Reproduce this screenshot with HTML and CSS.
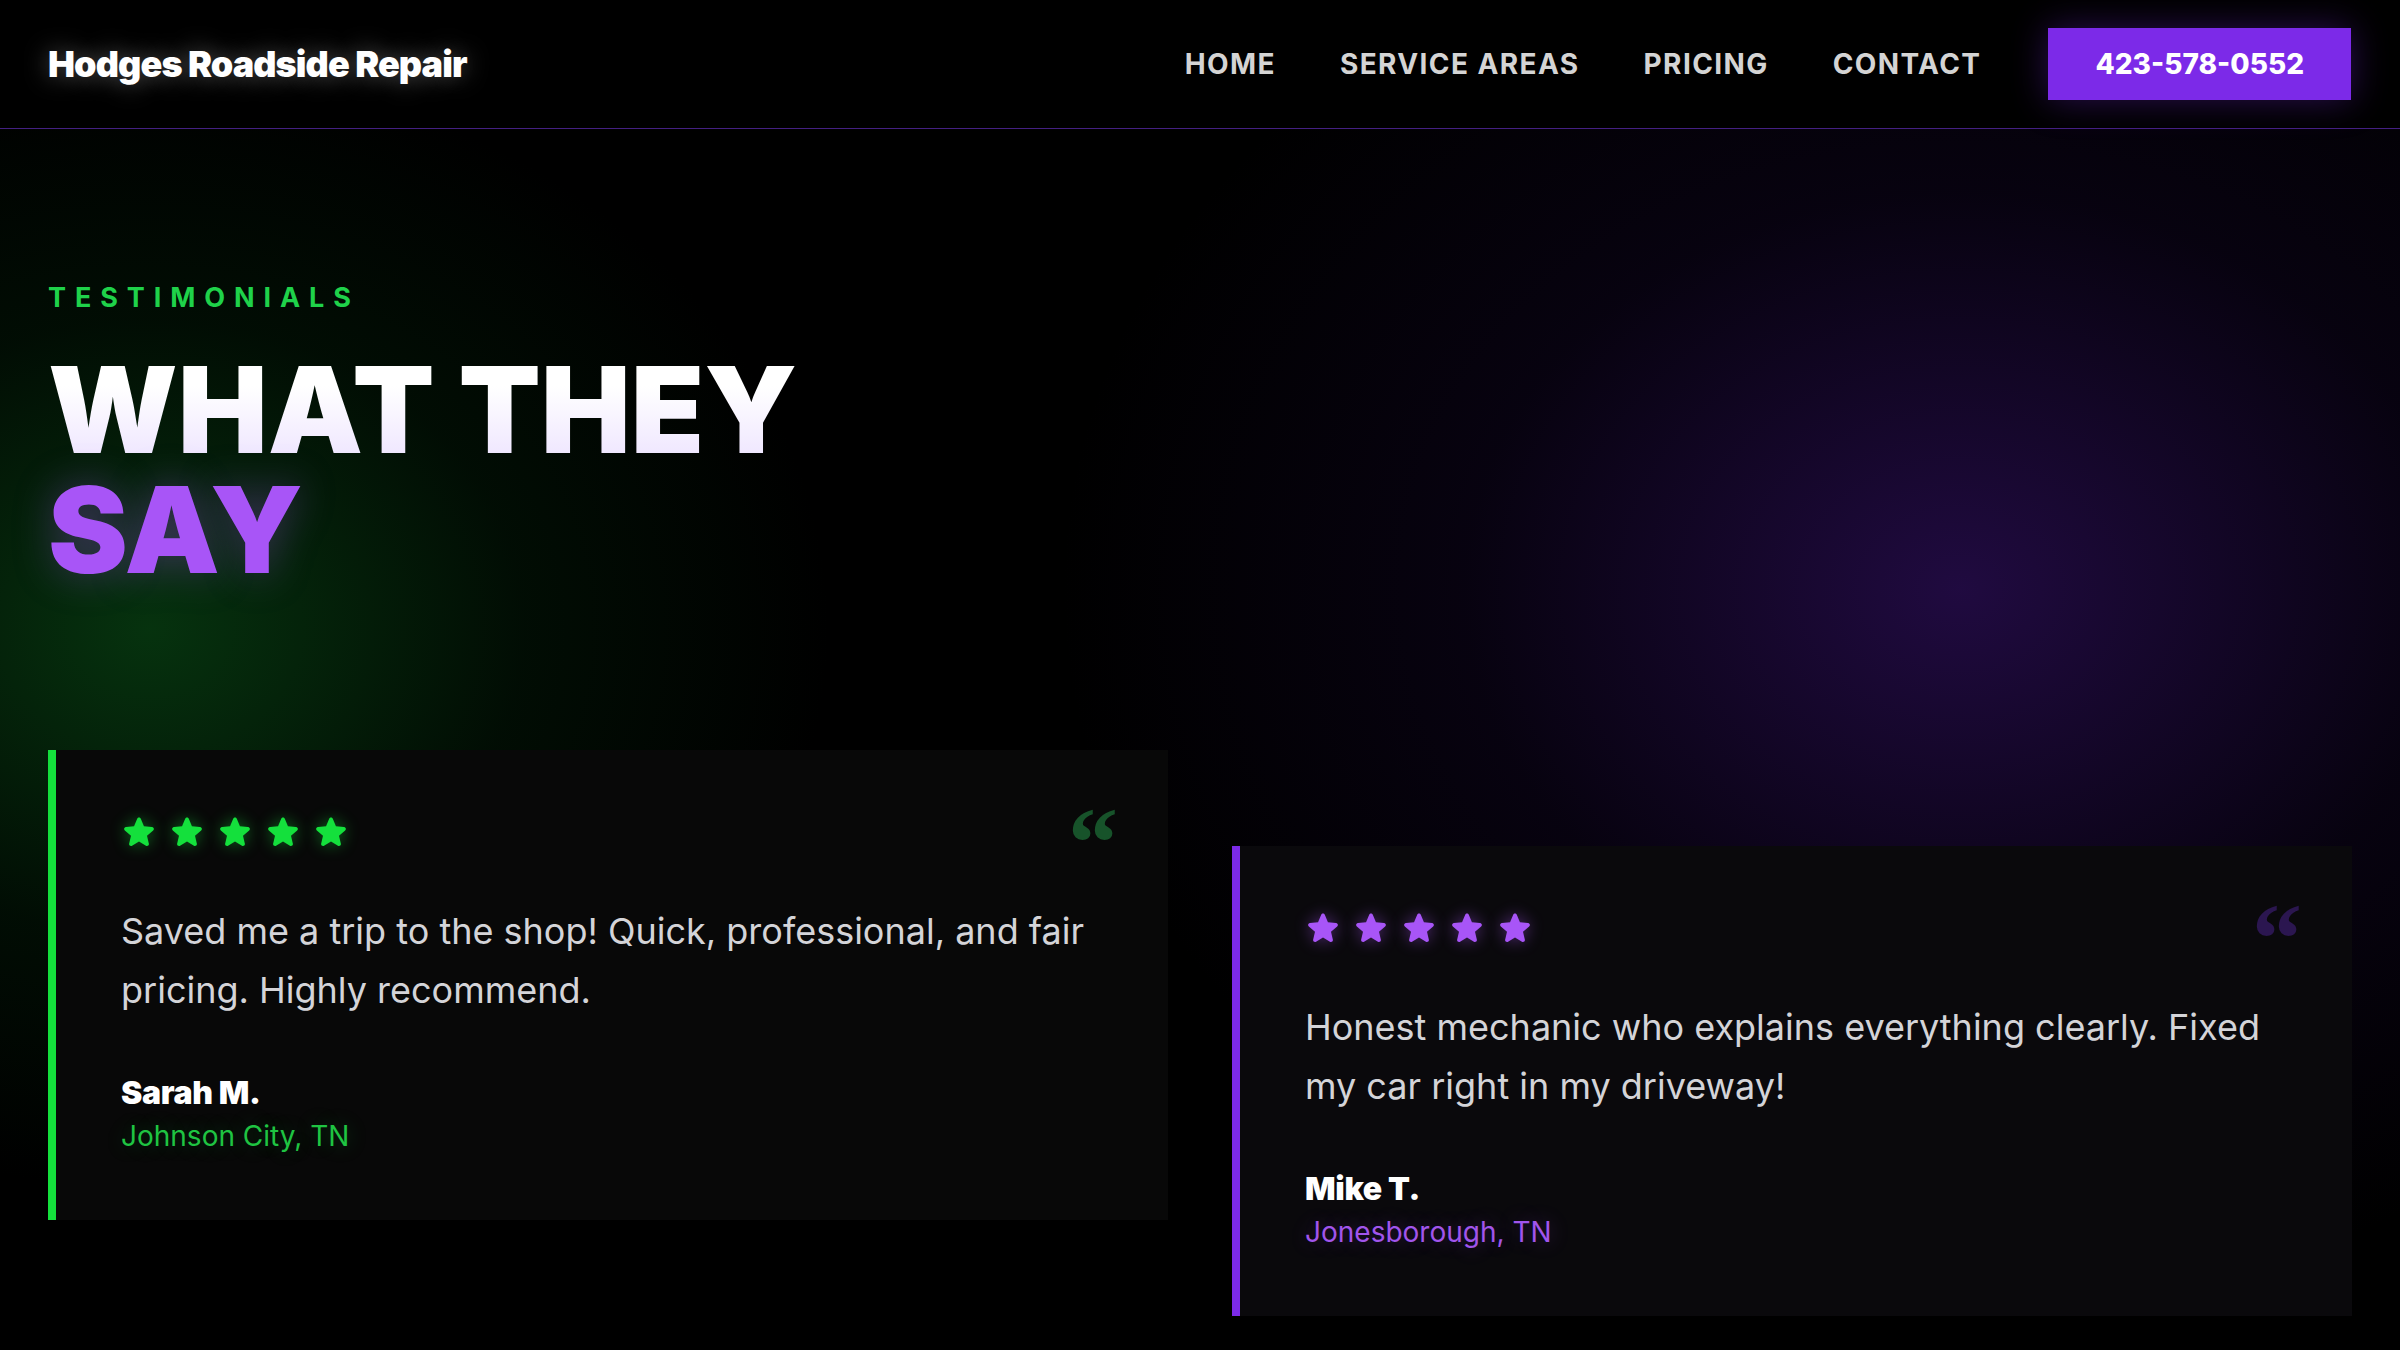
FILE: index.html
```html
<!DOCTYPE html>
<html lang="en">
<head>
<meta charset="utf-8">
<title>Hodges Roadside Repair - Testimonials</title>
<link rel="stylesheet" href="styles.css">
</head>
<body>
<header class="site-header">
  <a class="logo" href="#">Hodges Roadside Repair</a>
  <nav class="nav">
    <a class="nav-link" href="#">HOME</a>
    <a class="nav-link" href="#">SERVICE AREAS</a>
    <a class="nav-link" href="#">PRICING</a>
    <a class="nav-link" href="#">CONTACT</a>
    <a class="btn-call" href="#">423-578-0552</a>
  </nav>
</header>
<main class="testimonials">
  <p class="eyebrow">TESTIMONIALS</p>
  <h2 class="headline"><span class="headline-white">WHAT THEY</span><span class="headline-purple">SAY</span></h2>
  <div class="cards">
    <article class="card card-green">
      <span class="quote-mark">&ldquo;</span>
      <div class="stars">
        <svg class="star" viewBox="0 0 24 24"><path d="M10.788 3.21c.448-1.077 1.976-1.077 2.424 0l2.082 5.006 5.404.434c1.164.093 1.636 1.545.749 2.305l-4.117 3.527 1.257 5.273c.271 1.136-.964 2.033-1.96 1.425L12 18.354 7.373 21.18c-.996.608-2.231-.29-1.960-1.425l1.257-5.273-4.117-3.527c-.887-.76-.415-2.212.749-2.305l5.404-.434 2.082-5.005Z"/></svg>
        <svg class="star" viewBox="0 0 24 24"><path d="M10.788 3.21c.448-1.077 1.976-1.077 2.424 0l2.082 5.006 5.404.434c1.164.093 1.636 1.545.749 2.305l-4.117 3.527 1.257 5.273c.271 1.136-.964 2.033-1.96 1.425L12 18.354 7.373 21.18c-.996.608-2.231-.29-1.960-1.425l1.257-5.273-4.117-3.527c-.887-.76-.415-2.212.749-2.305l5.404-.434 2.082-5.005Z"/></svg>
        <svg class="star" viewBox="0 0 24 24"><path d="M10.788 3.21c.448-1.077 1.976-1.077 2.424 0l2.082 5.006 5.404.434c1.164.093 1.636 1.545.749 2.305l-4.117 3.527 1.257 5.273c.271 1.136-.964 2.033-1.96 1.425L12 18.354 7.373 21.18c-.996.608-2.231-.29-1.960-1.425l1.257-5.273-4.117-3.527c-.887-.76-.415-2.212.749-2.305l5.404-.434 2.082-5.005Z"/></svg>
        <svg class="star" viewBox="0 0 24 24"><path d="M10.788 3.21c.448-1.077 1.976-1.077 2.424 0l2.082 5.006 5.404.434c1.164.093 1.636 1.545.749 2.305l-4.117 3.527 1.257 5.273c.271 1.136-.964 2.033-1.96 1.425L12 18.354 7.373 21.18c-.996.608-2.231-.29-1.960-1.425l1.257-5.273-4.117-3.527c-.887-.76-.415-2.212.749-2.305l5.404-.434 2.082-5.005Z"/></svg>
        <svg class="star" viewBox="0 0 24 24"><path d="M10.788 3.21c.448-1.077 1.976-1.077 2.424 0l2.082 5.006 5.404.434c1.164.093 1.636 1.545.749 2.305l-4.117 3.527 1.257 5.273c.271 1.136-.964 2.033-1.96 1.425L12 18.354 7.373 21.18c-.996.608-2.231-.29-1.960-1.425l1.257-5.273-4.117-3.527c-.887-.76-.415-2.212.749-2.305l5.404-.434 2.082-5.005Z"/></svg>
      </div>
      <p class="quote-text">Saved me a trip to the shop! Quick, professional, and fair pricing. Highly recommend.</p>
      <p class="author-name">Sarah M.</p>
      <p class="author-place">Johnson City, TN</p>
    </article>
    <article class="card card-purple">
      <span class="quote-mark">&ldquo;</span>
      <div class="stars">
        <svg class="star" viewBox="0 0 24 24"><path d="M10.788 3.21c.448-1.077 1.976-1.077 2.424 0l2.082 5.006 5.404.434c1.164.093 1.636 1.545.749 2.305l-4.117 3.527 1.257 5.273c.271 1.136-.964 2.033-1.96 1.425L12 18.354 7.373 21.18c-.996.608-2.231-.29-1.960-1.425l1.257-5.273-4.117-3.527c-.887-.76-.415-2.212.749-2.305l5.404-.434 2.082-5.005Z"/></svg>
        <svg class="star" viewBox="0 0 24 24"><path d="M10.788 3.21c.448-1.077 1.976-1.077 2.424 0l2.082 5.006 5.404.434c1.164.093 1.636 1.545.749 2.305l-4.117 3.527 1.257 5.273c.271 1.136-.964 2.033-1.96 1.425L12 18.354 7.373 21.18c-.996.608-2.231-.29-1.960-1.425l1.257-5.273-4.117-3.527c-.887-.76-.415-2.212.749-2.305l5.404-.434 2.082-5.005Z"/></svg>
        <svg class="star" viewBox="0 0 24 24"><path d="M10.788 3.21c.448-1.077 1.976-1.077 2.424 0l2.082 5.006 5.404.434c1.164.093 1.636 1.545.749 2.305l-4.117 3.527 1.257 5.273c.271 1.136-.964 2.033-1.96 1.425L12 18.354 7.373 21.18c-.996.608-2.231-.29-1.960-1.425l1.257-5.273-4.117-3.527c-.887-.76-.415-2.212.749-2.305l5.404-.434 2.082-5.005Z"/></svg>
        <svg class="star" viewBox="0 0 24 24"><path d="M10.788 3.21c.448-1.077 1.976-1.077 2.424 0l2.082 5.006 5.404.434c1.164.093 1.636 1.545.749 2.305l-4.117 3.527 1.257 5.273c.271 1.136-.964 2.033-1.96 1.425L12 18.354 7.373 21.18c-.996.608-2.231-.29-1.960-1.425l1.257-5.273-4.117-3.527c-.887-.76-.415-2.212.749-2.305l5.404-.434 2.082-5.005Z"/></svg>
        <svg class="star" viewBox="0 0 24 24"><path d="M10.788 3.21c.448-1.077 1.976-1.077 2.424 0l2.082 5.006 5.404.434c1.164.093 1.636 1.545.749 2.305l-4.117 3.527 1.257 5.273c.271 1.136-.964 2.033-1.96 1.425L12 18.354 7.373 21.18c-.996.608-2.231-.29-1.960-1.425l1.257-5.273-4.117-3.527c-.887-.76-.415-2.212.749-2.305l5.404-.434 2.082-5.005Z"/></svg>
      </div>
      <p class="quote-text">Honest mechanic who explains everything clearly. Fixed my car right in my driveway!</p>
      <p class="author-name">Mike T.</p>
      <p class="author-place">Jonesborough, TN</p>
    </article>
  </div>
</main>
</body>
</html>
```

FILE: styles.css
```css
* { box-sizing: border-box; }

html, body {
  margin: 0;
  padding: 0;
}

body {
  background: #000;
  color: #fff;
  font-family: "Inter", "Liberation Sans", sans-serif;
  min-height: 1350px;
  overflow: hidden;
}

a { text-decoration: none; color: inherit; }
p { margin: 0; }

/* Header */
.site-header {
  height: 129px;
  display: flex;
  align-items: center;
  justify-content: space-between;
  padding: 0 49px 0 48px;
  border-bottom: 1px solid rgba(124, 58, 237, 0.55);
  background: #000;
}

.logo {
  font-size: 36px;
  font-weight: 900;
  letter-spacing: -0.025em;
  color: #fff;
  text-shadow: 0 0 24px rgba(255, 255, 255, 0.35);
}

.nav {
  display: flex;
  align-items: center;
  gap: 64px;
}

.nav-link {
  font-size: 28px;
  font-weight: 700;
  letter-spacing: 0.05em;
  color: #d4d4d4;
}

.btn-call {
  display: flex;
  align-items: center;
  height: 72px;
  margin-left: 3px;
  padding: 0 47px;
  background: #7c2ae8;
  color: #fff;
  font-size: 28px;
  font-weight: 800;
  letter-spacing: 0;
  box-shadow: 0 0 36px rgba(124, 42, 232, 0.35);
}

/* Section */
.testimonials {
  padding: 148px 48px 0;
  height: 1221px;
  background:
    radial-gradient(ellipse 680px 560px at 150px 500px, rgba(14, 120, 34, 0.42), rgba(6, 64, 18, 0.2) 55%, transparent 100%),
    radial-gradient(ellipse 900px 720px at 1960px 460px, rgba(80, 26, 160, 0.4), rgba(44, 14, 96, 0.16) 55%, transparent 100%),
    #000;
}

.eyebrow {
  font-size: 27px;
  line-height: 42px;
  font-weight: 700;
  letter-spacing: 0.33em;
  color: #1fd24a;
}

.headline {
  margin: 31px 0 0;
  font-size: 120px;
  line-height: 1;
  font-weight: 900;
  letter-spacing: 0;
}

.headline-white {
  display: block;
  width: max-content;
  background: linear-gradient(180deg, #ffffff 30%, #ece2ff 100%);
  -webkit-background-clip: text;
  background-clip: text;
  color: transparent;
}

.headline-purple {
  display: block;
  color: #a855f7;
  text-shadow: 0 0 40px rgba(168, 85, 247, 0.35);
}

/* Cards */
.cards {
  margin-top: 160px;
  display: grid;
  grid-template-columns: 1fr 1fr;
  gap: 64px;
  align-items: start;
}

.card {
  position: relative;
  height: 470px;
  padding: 64px 64px 64px 65px;
  background: #080808;
}

.card-green { border-left: 8px solid #14e03c; }
.card-purple {
  border-left: 8px solid #7c2ae8;
  margin-top: 96px;
  background: #0a090c;
}

.quote-mark {
  position: absolute;
  top: 43px;
  right: 50px;
  font-family: "Liberation Serif", "Times New Roman", serif;
  font-size: 100px;
  line-height: 1;
  font-weight: 700;
}

.card-green .quote-mark { color: #17532a; }
.card-purple .quote-mark { color: #2b1650; }

.stars {
  display: flex;
  gap: 12px;
  height: 36px;
  margin-bottom: 52px;
}

.star {
  width: 36px;
  height: 36px;
}

.card-green .star {
  fill: #14e03c;
  filter: drop-shadow(0 0 8px rgba(20, 224, 60, 0.45));
}

.card-purple .star {
  fill: #a855f7;
  filter: drop-shadow(0 0 8px rgba(168, 85, 247, 0.45));
}

.quote-text {
  font-size: 36px;
  line-height: 1.625;
  color: #d4d4d8;
  font-weight: 400;
}

.author-name {
  margin-top: 51px;
  font-size: 32px;
  line-height: 45px;
  font-weight: 900;
  letter-spacing: -0.01em;
  color: #fff;
}

.author-place {
  font-size: 28px;
  line-height: 42px;
  font-weight: 400;
}

.card-green .author-place {
  color: #1fc442;
  text-shadow: 0 0 20px rgba(31, 196, 66, 0.3);
}

.card-purple .author-place {
  color: #a155ec;
  text-shadow: 0 0 20px rgba(168, 85, 247, 0.3);
}
```
